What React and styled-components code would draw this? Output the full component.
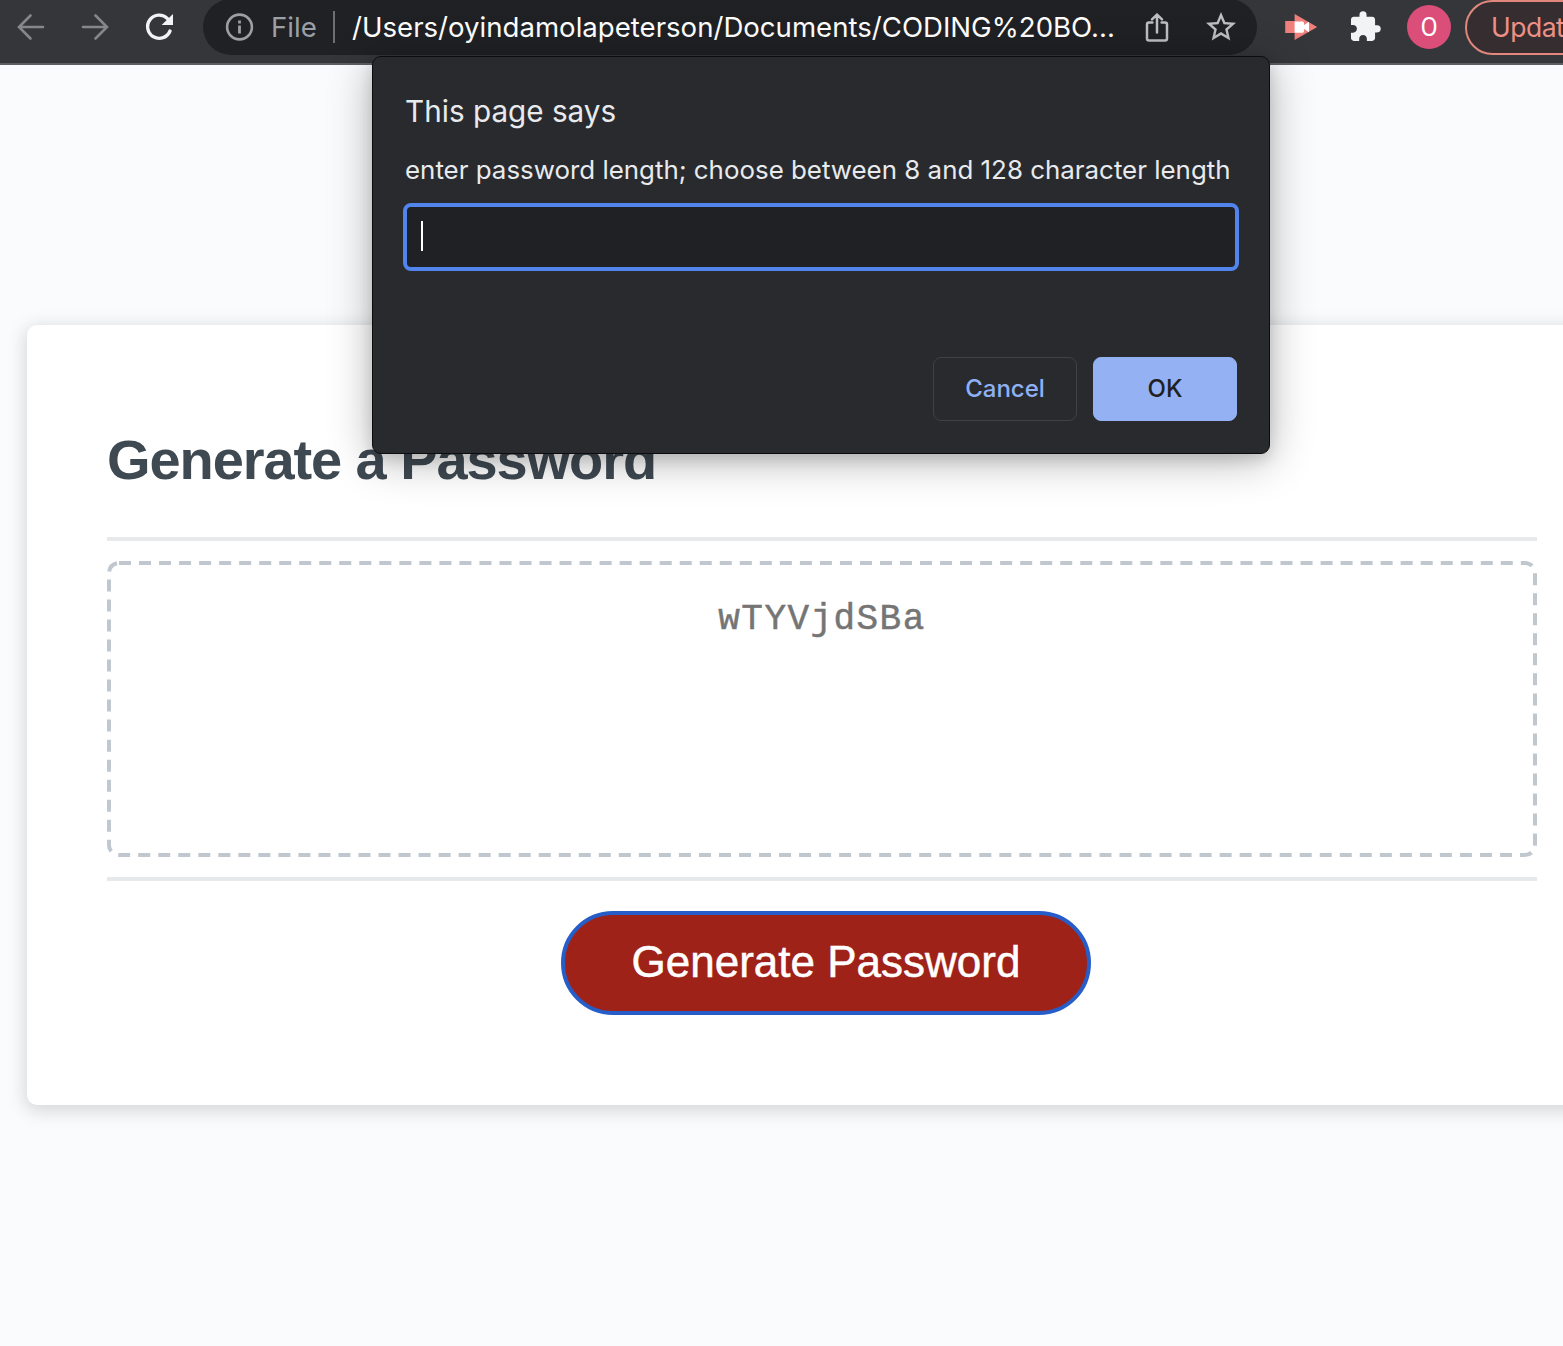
import React from "react";
import styled, { createGlobalStyle, css } from "styled-components";

const UI = `Inter, Roboto, "Liberation Sans", sans-serif`;

const GlobalStyle = createGlobalStyle`
  *, *::before, *::after { box-sizing: border-box; }
  html, body { margin: 0; padding: 0; }
  body { background: #fafbfd; overflow: hidden; }
`;

const Window = styled.div`
  position: relative;
  width: 1563px;
  height: 1346px;
  overflow: hidden;
  display: flex;
  flex-direction: column;
  background: #fafbfd;
  font-family: ${UI};
`;

const Toolbar = styled.header`
  flex: none;
  height: 65px;
  padding-bottom: 9px;
  display: flex;
  align-items: center;
  overflow: hidden;
  background: #35363a;
  border-bottom: 2px solid #5d5e62;
`;

const NavButtons = styled.nav`
  flex: none;
  display: flex;
  width: 203px;
  padding-left: 15px;
  gap: 32px;
`;

const Icon = styled.svg`
  flex: none;
  display: block;
  width: ${(p) => p.$size || 32}px;
  height: ${(p) => p.$size || 32}px;
  color: ${(p) => p.$color || "#f1f3f4"};
  fill: none;
  overflow: visible;
`;

const AddressBar = styled.div`
  flex: none;
  display: flex;
  align-items: center;
  width: 1054px;
  height: 56px;
  padding: 0 18px 0 20px;
  border-radius: 28px;
  background: #202124;
  white-space: nowrap;
`;

const Scheme = styled.span`
  width: 50px;
  margin-left: 16px;
  font-size: 27.6px;
  line-height: 34px;
  color: #9aa0a6;
`;

const Divider = styled.span`
  width: 2px;
  height: 32px;
  margin: 0 17px 0 12px;
  background: #6d7073;
`;

const Address = styled.span`
  flex: 1;
  font-size: 27.6px;
  line-height: 34px;
  color: #fff;
`;

const AddressActions = styled.div`
  display: flex;
  align-items: center;
  gap: 30px;
`;

const Extensions = styled.div`
  flex: none;
  display: flex;
  align-items: center;
  margin-left: 28px;
  gap: 32px;
`;

const Avatar = styled.div`
  flex: none;
  display: grid;
  place-items: center;
  width: 44px;
  height: 44px;
  margin-left: 24px;
  border-radius: 50%;
  background: #db4e79;
  color: #fff;
  font: 400 25px/1 Roboto, sans-serif;
`;

const UpdateButton = styled.button`
  flex: none;
  width: 160px;
  height: 55px;
  margin-left: 14px;
  padding: 0 0 0 24px;
  border: 2px solid #e2877c;
  border-radius: 28px;
  background: #352d2f;
  color: #ee9085;
  font: 400 26.5px/1 ${UI};
  letter-spacing: -0.5px;
  text-align: left;
`;

const Page = styled.main`
  flex: 1;
  display: flex;
  align-items: flex-start;
  padding: 260px 0 0 27px;
`;

const Card = styled.section`
  flex: none;
  display: flex;
  flex-direction: column;
  width: 1590px;
  height: 780px;
  padding: 80px;
  border-radius: 10px;
  background: #fff;
  box-shadow: rgba(0, 0, 0, 0.15) 0 4px 18px 2px;
`;

const CardHeader = styled.div`
  height: 136px;
  padding-top: 23px;
  border-bottom: 4px solid #e8e9eb;
`;

const Title = styled.h2`
  margin: 0;
  font: 700 56px/64px "Liberation Sans", Arial, sans-serif;
  letter-spacing: -1.08px;
  color: #3f4952;
`;

const CardBody = styled.div`
  padding: 20px 0;
`;

const PasswordBox = styled.div`
  position: relative;
  height: 296px;
  padding-top: 35px;
  color: #757575;
  font: 400 36px/48px "Liberation Mono", "Courier New", monospace;
  letter-spacing: 1.44px;
  text-align: center;
  -webkit-text-stroke: 0.5px #757575;
`;

const DashedOutline = styled.svg`
  position: absolute;
  inset: 0;
  width: 100%;
  height: 100%;
  fill: none;
  stroke: #c0c7cf;
  stroke-width: 4px;
  stroke-dasharray: 12 8.026;
`;

const CardFooter = styled.div`
  display: flex;
  justify-content: center;
  padding: 30px 0 0 8px;
  border-top: 4px solid #e6e8ea;
`;

const GenerateButton = styled.button`
  width: 530px;
  height: 104px;
  padding: 0 0 2px;
  border: 4px solid #265dc8;
  border-radius: 52px;
  background: #9f2219;
  color: #fff;
  font: 400 44px/1 "Liberation Sans", Arial, sans-serif;
  -webkit-text-stroke: 0.5px #fff;
`;

const Dialog = styled.div`
  position: absolute;
  top: 56px;
  left: 372px;
  width: 898px;
  height: 398px;
  display: flex;
  flex-direction: column;
  padding: 34px 32px 32px;
  border: 1px solid #0c0c0e;
  border-radius: 9px;
  background: #292a2d;
  box-shadow: 0 6px 44px rgba(0, 0, 0, 0.3), 0 6px 14px rgba(0, 0, 0, 0.12);
  color: #e8eaed;
  white-space: nowrap;
`;

const DialogTitle = styled.h1`
  margin: 0;
  font-size: 29.7px;
  font-weight: 400;
  line-height: 40px;
`;

const DialogMessage = styled.p`
  margin: 21px 0 15px;
  font-size: 25.9px;
  line-height: 36px;
`;

const PromptField = styled.div`
  display: flex;
  align-items: center;
  width: 836px;
  height: 68px;
  margin-left: -2px;
  padding: 0 14px 2px;
  border: 4px solid #5284ee;
  border-radius: 8px;
  background: #202124;
`;

const Caret = styled.span`
  width: 2px;
  height: 30px;
  background: #fff;
`;

const DialogActions = styled.div`
  display: flex;
  justify-content: flex-end;
  gap: 16px;
  margin-top: auto;
`;

const DialogButton = styled.button`
  width: 144px;
  height: 64px;
  padding: 0;
  border: 1px solid #3f4145;
  border-radius: 8px;
  background: transparent;
  color: #8fb0f5;
  font: 500 24px/1 ${UI};
  ${(p) =>
    p.$primary &&
    css`
      border-color: #94b2f3;
      background: #94b2f3;
      color: #202124;
    `}
`;

const Arrow = ({ flip }) => (
  <Icon viewBox="0 0 32 32" $color="#85878a">
    <path
      d={flip ? "M4 16H27.5M16.5 4.5L28 16L16.5 27.5" : "M28 16H4.5M15.5 4.5L4 16L15.5 27.5"}
      stroke="currentColor"
      strokeWidth="2.6"
      strokeLinecap="round"
    />
  </Icon>
);

const Reload = () => (
  <Icon viewBox="0 0 32 32">
    <path d="M27 20A11.6 11.6 0 1 1 24.5 7.6" stroke="currentColor" strokeWidth="3.4" strokeLinecap="round" />
    <path d="M30 3V14H18.6Z" fill="currentColor" />
  </Icon>
);

const Info = () => (
  <Icon viewBox="0 0 32 32" $color="#9aa0a6">
    <circle cx="16.5" cy="16" r="12.4" stroke="currentColor" strokeWidth="2.6" />
    <path d="M15.1 9.6h2.8v2.8h-2.8zM15.1 14.6h2.8v8h-2.8z" fill="currentColor" />
  </Icon>
);

const Share = () => (
  <Icon viewBox="0 0 32 32" $color="#bdbfc1">
    <path
      d="M11.4 11.4H8a2 2 0 0 0-2 2V27.4a2 2 0 0 0 2 2H24a2 2 0 0 0 2-2V13.4a2 2 0 0 0-2-2H20.600M16 21.500V3.600M11 8.400L16 3.600L21 8.400"
      stroke="currentColor"
      strokeWidth="2.5"
      strokeLinecap="round"
      strokeLinejoin="round"
    />
  </Icon>
);

const Star = () => (
  <Icon viewBox="0 0 24 24" $color="#bdbfc1" $size={36}>
    <path
      fill="currentColor"
      d="M22 9.240l-7.190-.620L12 2 9.190 8.630 2 9.240l5.460 4.730L5.820 21 12 17.270 18.180 21l-1.630-7.030L22 9.240zM12 15.400l-3.760 2.270 1-4.280-3.320-2.880 4.380-.380L12 6.100l1.710 4.040 4.380.380-3.320 2.880 1 4.280L12 15.400z"
    />
  </Icon>
);

const Recorder = () => (
  <Icon viewBox="0 0 32 32">
    <path d="M0.2 10H10V22H0.2Z" fill="#f07f7c" />
    <path d="M9.600 3L32.200 16L9.600 29Z" fill="#f07f7c" />
    <path d="M9.600 10.400H17.500Q19 10.400 19 12V14L24 10.700V21.300L19 18V20Q19 21.800 17.500 21.800H9.600Z" fill="#fff" />
  </Icon>
);

const Puzzle = () => (
  <Icon viewBox="0.600 0.200 24 24" $size={34}>
    <path
      fill="currentColor"
      d="M20.500 11H19V7c0-1.100-.900-2-2-2h-4V3.500a2.500 2.500 0 0 0-5 0V5H4c-1.100 0-1.990.900-1.990 2v3.800H3.500c1.490 0 2.700 1.210 2.700 2.700s-1.210 2.700-2.700 2.700H2V20c0 1.100.900 2 2 2h3.800v-1.500c0-1.490 1.210-2.700 2.700-2.700 1.490 0 2.700 1.210 2.700 2.700V22H17c1.100 0 2-.900 2-2v-4h1.500a2.500 2.500 0 0 0 0-5z"
    />
  </Icon>
);

export default function App() {
  return (
    <>
      <GlobalStyle />
      <Window>
        <Toolbar>
          <NavButtons>
            <Arrow />
            <Arrow flip />
            <Reload />
          </NavButtons>
          <AddressBar>
            <Info />
            <Scheme>File</Scheme>
            <Divider />
            <Address>/Users/oyindamolapeterson/Documents/CODING%20BO...</Address>
            <AddressActions>
              <Share />
              <Star />
            </AddressActions>
          </AddressBar>
          <Extensions>
            <Recorder />
            <Puzzle />
          </Extensions>
          <Avatar>O</Avatar>
          <UpdateButton>Update</UpdateButton>
        </Toolbar>
        <Page>
          <Card>
            <CardHeader>
              <Title>Generate a Password</Title>
            </CardHeader>
            <CardBody>
              <PasswordBox>
                <DashedOutline viewBox="0 0 1430 296">
                  <rect x="2" y="2" width="1426" height="292" rx="10" />
                </DashedOutline>
                wTYVjdSBa
              </PasswordBox>
            </CardBody>
            <CardFooter>
              <GenerateButton>Generate Password</GenerateButton>
            </CardFooter>
          </Card>
        </Page>
        <Dialog role="dialog">
          <DialogTitle>This page says</DialogTitle>
          <DialogMessage>enter password length; choose between 8 and 128 character length</DialogMessage>
          <PromptField>
            <Caret />
          </PromptField>
          <DialogActions>
            <DialogButton>Cancel</DialogButton>
            <DialogButton $primary>OK</DialogButton>
          </DialogActions>
        </Dialog>
      </Window>
    </>
  );
}
